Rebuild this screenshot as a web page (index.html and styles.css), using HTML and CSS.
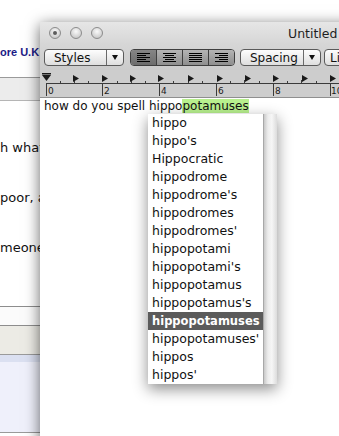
FILE: index.html
```html
<!DOCTYPE html>
<html lang="en">
<head>
  <meta charset="UTF-8" />
  <title>Untitled</title>
  <link rel="stylesheet" href="styles.css">
</head>
<body>
  <!-- Fenster im Hintergrund -->
  <div class="back">
    <div class="back-top"></div>
    <div class="back-head">ore U.K</div>
    <div class="back-bar"></div>
    <div class="back-text">
      <p>h what</p>
      <p>poor, a</p>
      <p>meone</p>
    </div>
    <div class="back-row"></div>
    <div class="back-tabs"></div>
    <div class="back-strip"></div>
    <div class="back-pane"></div>
  </div>

  <!-- TextEdit-Fenster -->
  <div class="window">
    <div class="titlebar">
      <div class="lights">
        <span class="light edited"></span>
        <span class="light"></span>
        <span class="light"></span>
      </div>
      <div class="title">Untitled</div>
    </div>

    <div class="toolbar">
      <div class="popup styles-popup">
        <span class="popup-label">Styles</span>
        <span class="popup-arrow"></span>
      </div>
      <div class="segmented">
        <span class="seg pressed">
          <svg width="15" height="9" viewBox="0 0 15 9"><path d="M1 .5h13M1 2.5h9M1 4.5h13M1 6.5h9M1 8.5h13" stroke="#000" stroke-width="1"/></svg>
        </span>
        <span class="seg">
          <svg width="15" height="9" viewBox="0 0 15 9"><path d="M1 .5h13M3 2.5h9M1 4.5h13M3 6.5h9M1 8.5h13" stroke="#000" stroke-width="1"/></svg>
        </span>
        <span class="seg">
          <svg width="15" height="9" viewBox="0 0 15 9"><path d="M1 .5h13M1 2.5h13M1 4.5h13M1 6.5h13M1 8.5h13" stroke="#000" stroke-width="1"/></svg>
        </span>
        <span class="seg">
          <svg width="15" height="9" viewBox="0 0 15 9"><path d="M1 .5h13M5 2.5h9M1 4.5h13M5 6.5h9M1 8.5h13" stroke="#000" stroke-width="1"/></svg>
        </span>
      </div>
      <div class="popup spacing-popup">
        <span class="popup-label">Spacing</span>
        <span class="popup-arrow"></span>
      </div>
      <div class="popup lists-popup">
        <span class="popup-label">Li</span>
      </div>
    </div>

    <div class="ruler">
      <svg width="299" height="27" viewBox="0 0 299 27">
        <path d="M6 13.5H299" stroke="#3a3a3a" stroke-width="1"/>
        <g stroke="#3a3a3a" stroke-width="1">
          <path d="M6.5 13v13M62.5 13v13M119.5 13v13M176.5 13v13M233.5 13v13M290.5 13v13"/>
          <path d="M20.5 11v2M34.5 10v3M48.5 11v2M77.5 11v2M91.5 10v3M105.5 11v2M133.5 11v2M148.5 10v3M162.5 11v2M190.5 11v2M204.5 10v3M219.5 11v2M247.5 11v2M261.5 10v3M276.5 11v2"/>
        </g>
        <g fill="#1a1a1a">
          <path d="M2 3h9v1.5H2z"/>
          <path d="M2 5h9l-4.5 6z"/>
          <path d="M33 5l6 3.5-6 3.5z"/>
          <path d="M62 5l6 3.5-6 3.5z"/>
          <path d="M90 5l6 3.5-6 3.5z"/>
          <path d="M118 5l6 3.5-6 3.5z"/>
          <path d="M148 5l6 3.5-6 3.5z"/>
          <path d="M177 5l6 3.5-6 3.5z"/>
          <path d="M205 5l6 3.5-6 3.5z"/>
          <path d="M233 5l6 3.5-6 3.5z"/>
          <path d="M262 5l6 3.5-6 3.5z"/>
          <path d="M290 5l6 3.5-6 3.5z"/>
        </g>
        <g class="ruler-num">
          <text x="8" y="24">0</text>
          <text x="64" y="24">2</text>
          <text x="121" y="24">4</text>
          <text x="178" y="24">6</text>
          <text x="235" y="24">8</text>
          <text x="291" y="24">10</text>
        </g>
      </svg>
    </div>

    <div class="doc">
      <div class="doc-line">how do you spell hippo<span class="completion">potamuses</span></div>

      <!-- Vervollständigungsliste -->
      <div class="completions">
        <ul class="completion-list">
          <li>hippo</li>
          <li>hippo's</li>
          <li>Hippocratic</li>
          <li>hippodrome</li>
          <li>hippodrome's</li>
          <li>hippodromes</li>
          <li>hippodromes'</li>
          <li>hippopotami</li>
          <li>hippopotami's</li>
          <li>hippopotamus</li>
          <li>hippopotamus's</li>
          <li class="selected">hippopotamuses</li>
          <li>hippopotamuses'</li>
          <li>hippos</li>
          <li>hippos'</li>
        </ul>
        <div class="scroll-track"></div>
      </div>
    </div>
  </div>
</body>
</html>
```

FILE: styles.css
```css
body {
  margin: 0;
  width: 339px;
  height: 436px;
  overflow: hidden;
  position: relative;
  background: #fff;
  font-family: "DejaVu Sans", Verdana, sans-serif;
}

/* Hintergrundfenster */
.back {
  width: 339px;
  font-size: 13px;
  color: #111;
}
.back-top {
  height: 44px;
}
.back-head {
  height: 33px;
  line-height: 16px;
  font-family: "Liberation Sans", Arial, sans-serif;
  font-size: 11px;
  font-weight: bold;
  color: #1b1b86;
  border-bottom: 1px solid #9a9a9a;
}
.back-bar {
  height: 22px;
  background: #ececec;
  border-bottom: 1px solid #b5b5b5;
}
.back-text {
  height: 205px;
  padding-top: 39px;
  box-sizing: border-box;
}
.back-text p {
  margin: 0 0 35px;
  line-height: 15px;
}
.back-row {
  height: 18px;
  border-top: 1px solid #8d8d8d;
  border-bottom: 1px solid #8d8d8d;
  background: #fbfbfb;
}
.back-tabs {
  height: 28px;
  background: #ecebe5;
  border-bottom: 1px solid #9a9a9a;
}
.back-strip {
  height: 7px;
  background: #dbe0f1;
}
.back-pane {
  height: 70px;
  background: #eff0fb;
  border-bottom: 1px solid #9a9a9a;
}

/* Vorderes Fenster */
.window {
  position: absolute;
  left: 40px;
  top: 22px;
  width: 320px;
  height: 430px;
  background: #fff;
  box-shadow: 0 3px 14px rgba(0, 0, 0, 0.6);
}
.titlebar {
  height: 22px;
  display: flex;
  align-items: center;
  background: linear-gradient(#e6e6e6, #d6d6d6);
}
.lights {
  display: flex;
  gap: 9px;
  padding-left: 9px;
}
.light {
  width: 10px;
  height: 10px;
  border-radius: 50%;
  border: 1px solid #8c8c8c;
  background: radial-gradient(circle at 50% 35%, #fafafa, #cfcfcf 70%, #b8b8b8);
  display: flex;
  align-items: center;
  justify-content: center;
}
.light.edited::after {
  content: "";
  width: 4px;
  height: 4px;
  border-radius: 50%;
  background: #5c5c5c;
}
.title {
  margin-left: 185px;
  font-size: 12.5px;
  color: #1e1e1e;
  white-space: nowrap;
}

.toolbar {
  height: 26px;
  box-sizing: border-box;
  padding: 5px 0 0 4px;
  display: flex;
  align-items: flex-start;
  background: linear-gradient(#d6d6d6, #cbcbcb);
}
.toolbar > * {
  flex-shrink: 0;
}
.popup {
  height: 17px;
  box-sizing: border-box;
  border: 1px solid #5a5a5a;
  border-radius: 4px;
  background: linear-gradient(#fdfdfd, #ececec 55%, #dedede);
  display: flex;
  align-items: center;
  font-size: 12px;
  color: #111;
}
.popup-label {
  padding-left: 9px;
  flex: 1;
}
.popup-arrow {
  width: 16px;
  height: 15px;
  border-left: 1px solid #6a6a6a;
  display: flex;
  align-items: center;
  justify-content: center;
}
.popup-arrow::after {
  content: "";
  border-left: 3.5px solid transparent;
  border-right: 3.5px solid transparent;
  border-top: 5px solid #111;
}
.styles-popup {
  width: 80px;
}
.spacing-popup {
  width: 81px;
  margin-left: 5px;
}
.lists-popup {
  width: 80px;
  margin-left: 3px;
}
.lists-popup .popup-label {
  padding-left: 5px;
}
.segmented {
  margin-left: 6px;
  height: 17px;
  box-sizing: border-box;
  display: flex;
  border: 1px solid #3e3e3e;
  border-radius: 4px;
  overflow: hidden;
}
.seg {
  width: 25px;
  display: flex;
  align-items: center;
  justify-content: center;
  background: linear-gradient(#b4b4b4, #8e8e8e);
  border-left: 1px solid #3e3e3e;
}
.seg:first-child {
  border-left: none;
}
.seg.pressed {
  background: linear-gradient(#858585, #6c6c6c);
}

.ruler {
  height: 27px;
  background: #cdcdcd;
  border-bottom: 1px solid #8f8f8f;
}
.ruler svg {
  display: block;
}
.ruler-num {
  font-family: "DejaVu Sans", sans-serif;
  font-size: 9px;
  fill: #1a1a1a;
}

/* Dokument */
.doc {
  position: relative;
  padding: 1px 0 0 4px;
  font-size: 12px;
  color: #111;
}
.doc-line {
  line-height: 15px;
  white-space: nowrap;
}
.completion {
  background: #b8f08e;
}

.completions {
  position: absolute;
  left: 108px;
  top: 16px;
  display: flex;
  box-shadow: 0 5px 14px rgba(0, 0, 0, 0.45);
}
.completion-list {
  list-style: none;
  margin: 0;
  padding: 0;
  width: 115px;
  background: #fff;
  border-right: 1px solid #a8a8a8;
}
.completion-list li {
  height: 18px;
  line-height: 18px;
  padding-left: 4px;
  font-size: 12.5px;
  color: #111;
  white-space: nowrap;
}
.completion-list li.selected {
  background: #5b5b5b;
  color: #fff;
  font-weight: bold;
  font-size: 11.5px;
}
.scroll-track {
  width: 13px;
  background: linear-gradient(90deg, #c9c9c9, #ececec 30%, #f6f6f6 60%, #dcdcdc);
}
```
